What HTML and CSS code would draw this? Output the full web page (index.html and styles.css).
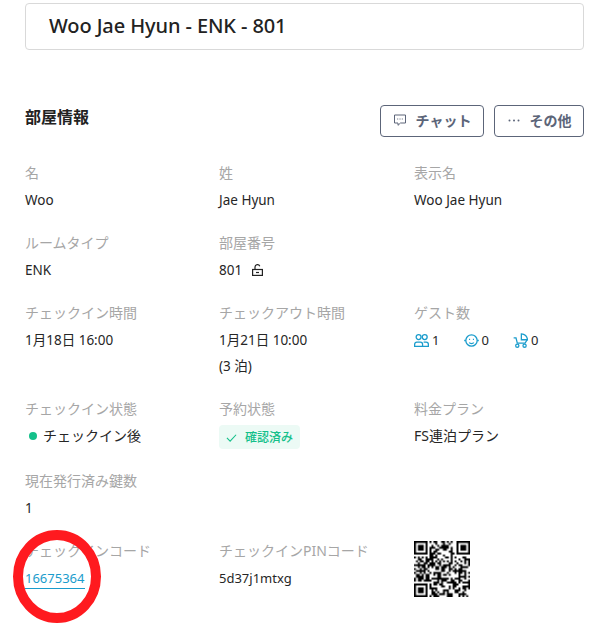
FILE: index.html
```html
<!DOCTYPE html>
<html lang="ja">
<head>
<meta charset="utf-8">
<title>部屋情報</title>
<link rel="stylesheet" href="styles.css">
</head>
<body>
<main class="page">
  <div class="title-box">Woo Jae Hyun - ENK - 801</div>
  <header class="section-head">
    <h2 class="section-title">部屋情報</h2>
    <div class="actions">
      <button class="btn btn-chat" type="button">
        <svg class="btn-icon" viewBox="0 0 14 14" fill="none" stroke="currentColor" stroke-width="1"><path d="M1.500 2h11v8H7.500L5 12.300v-2.300H1.500z"/><path d="M4.200 6h1M6.500 6h1M8.800 6h1"/></svg>
        チャット
      </button>
      <button class="btn btn-more" type="button">
        <svg class="btn-icon" viewBox="0 0 14 14" fill="currentColor"><circle cx="2.500" cy="7.500" r="1"/><circle cx="7" cy="7.500" r="1"/><circle cx="11.500" cy="7.500" r="1"/></svg>
        その他
      </button>
    </div>
  </header>
  <section class="grid">
    <div class="cell"><div class="label">名</div><div class="value">Woo</div></div>
    <div class="cell"><div class="label">姓</div><div class="value">Jae Hyun</div></div>
    <div class="cell"><div class="label">表示名</div><div class="value">Woo Jae Hyun</div></div>

    <div class="cell"><div class="label">ルームタイプ</div><div class="value">ENK</div></div>
    <div class="cell"><div class="label">部屋番号</div><div class="value value-row">801
      <svg class="lock" viewBox="0 0 11 12" fill="none" stroke="#222" stroke-width="1.200"><path d="M3 5.500V3a2.500 2.500 0 0 1 4.800-.8"/><rect x=".6" y="5.500" width="9.800" height="5.900"/><path d="M4 8.500h3"/></svg>
    </div></div>
    <div class="cell"></div>

    <div class="cell"><div class="label">チェックイン時間</div><div class="value">1月18日 16:00</div></div>
    <div class="cell"><div class="label">チェックアウト時間</div><div class="value">1月21日 10:00</div><div class="value value-next">(3 泊)</div></div>
    <div class="cell"><div class="label">ゲスト数</div><div class="value guests">
      <span class="guest">
        <svg class="guest-icon" viewBox="0 0 14 14" fill="none" stroke="currentColor" stroke-width="1.200"><circle cx="4.300" cy="3.800" r="2.300"/><circle cx="10" cy="3.800" r="2.300"/><path d="M.6 12.500V10.500a2 2 0 0 1 2-2h3.400a2 2 0 0 1 2 2v2zM9 8.500h2.400a2 2 0 0 1 2 2v2H8"/></svg>
        1</span>
      <span class="guest">
        <svg class="guest-icon" viewBox="0 0 14 14" fill="none" stroke="currentColor" stroke-width="1.200"><circle cx="7" cy="7" r="5.300"/><path d="M1.700 7H.2M13.800 7h-1.500M4.800 9c1.100 1.100 3.300 1.100 4.400 0"/><path d="M4.700 6h1M8.300 6h1"/></svg>
        0</span>
      <span class="guest">
        <svg class="guest-icon" viewBox="0 0 14 14" fill="none" stroke="currentColor" stroke-width="1.200"><path d="M7.800.8v5.500h5.700A5.700 5.700 0 0 0 7.800.8z"/><path d="M.6 4.500h2.200l1.200 5h7.300l1.900-3.200"/><circle cx="4" cy="11.800" r="1.500"/><circle cx="10.800" cy="11.800" r="1.500"/></svg>
        0</span>
    </div></div>

    <div class="cell"><div class="label">チェックイン状態</div><div class="value status"><span class="dot"></span>チェックイン後</div></div>
    <div class="cell"><div class="label">予約状態</div>
      <div class="tag">
        <svg class="tag-icon" viewBox="0 0 12 12" fill="none" stroke="currentColor" stroke-width="1.200"><path d="M1 6.500 4.500 10 11 3"/></svg>
        確認済み
      </div></div>
    <div class="cell"><div class="label">料金プラン</div><div class="value value-cjk">FS連泊プラン</div></div>

    <div class="cell"><div class="label">現在発行済み鍵数</div><div class="value">1</div></div>
    <div class="cell"></div>
    <div class="cell"></div>

    <div class="cell"><div class="label">チェックインコード</div><div class="value value-code"><a class="code-link" href="#">16675364</a></div></div>
    <div class="cell"><div class="label">チェックインPINコード</div><div class="value value-code">5d37j1mtxg</div></div>
    <div class="cell"><canvas id="qr" class="qr" width="29" height="29"></canvas></div>
  </section>
  <svg class="circle" viewBox="0 0 88 93" fill="none"><ellipse cx="44" cy="46.500" rx="39" ry="41.500" stroke="#ff1a1f" stroke-width="10"/></svg>
</main>
<script src="qr.js"></script>
</body>
</html>
```

FILE: styles.css
```css
* { box-sizing: border-box; }
html, body { margin: 0; padding: 0; background: #fff; }
body {
  font-family: "Noto Sans", "Noto Sans CJK JP", sans-serif;
  color: #262626;
  font-size: 13px;
}
.page {
  position: relative;
  width: 606px;
  height: 642px;
  padding: 3px 22px 0 25px;
  overflow: hidden;
}
.title-box {
  height: 47px;
  border: 1px solid #d9d9d9;
  border-radius: 4px;
  padding-left: 23px;
  font-size: 20px;
  letter-spacing: -0.1px;
  font-weight: 500;
  line-height: 43px;
  color: #222;
}
.section-head {
  display: flex;
  justify-content: space-between;
  align-items: flex-start;
  margin-top: 55px;
  height: 32px;
}
.section-title {
  margin: 0;
  font-size: 16px;
  line-height: 24px;
  font-weight: 700;
  color: #222;
}
.actions { display: flex; gap: 10px; }
.btn {
  display: flex;
  align-items: center;
  justify-content: center;
  height: 32px;
  border: 1px solid #5c6579;
  border-radius: 4px;
  background: #fff;
  color: #5c6579;
  font-family: inherit;
  font-size: 14px;
  font-weight: 700;
  padding: 0 0 2px;
}
.btn-chat { width: 104px; gap: 9px; }
.btn-more { width: 90px; gap: 9px; }
.btn-icon { width: 14px; height: 14px; }
.grid {
  display: grid;
  grid-template-columns: 194px 195px 170px;
  grid-template-rows: 70px 70px 96px 72px 70px 70px;
  margin-top: 21px;
}
.label {
  font-size: 14px;
  line-height: 22px;
  color: #a6a6a6;
  margin-top: 4px;
  margin-bottom: 5px;
}
.value {
  font-size: 13.500px;
  line-height: 22px;
  color: #262626;
}
.value-next { margin-top: 4px; }
.value-cjk { font-size: 14px; }
.value-code { font-size: 13px; }
.value-row { display: flex; align-items: center; gap: 10px; }
.lock { width: 11px; height: 12px; }
.guests { display: flex; }
.guest { display: flex; align-items: center; gap: 3px; width: 49.500px; font-size: 13px; }
.guest-icon { width: 15px; height: 15px; color: #1a9ccc; }
.status { display: flex; align-items: center; padding-left: 4px; gap: 6px; font-size: 14px; }
.dot { width: 8px; height: 8px; border-radius: 50%; background: #14c08a; }
.tag {
  display: inline-flex;
  align-items: center;
  gap: 8px;
  width: 81px;
  height: 24px;
  padding: 0 0 0 7px;
  background: #ecfaf5;
  color: #14c08a;
  border-radius: 4px;
  font-size: 12px;
  font-weight: 500;
}
.tag-icon { width: 11px; height: 11px; }
.code-link {
  display: inline-block;
  color: #1a9ccc;
  text-decoration: none;
  border-bottom: 1px solid #1a9ccc;
  line-height: 19px;
}
.qr {
  display: block;
  width: 56px;
  height: 56px;
  margin-top: 5px;
}
.circle {
  position: absolute;
  left: 13px;
  top: 530px;
  width: 88px;
  height: 93px;
}
```

FILE: qr.js
```js
var c = document.getElementById('qr').getContext('2d');
var n = 29, s = 12345;
function rnd() { s = (s * 1103515245 + 12345) & 0x7fffffff; return (s >> 16) & 1; }
function finder(x, y) {
  c.fillStyle = '#fff'; c.fillRect(x - 1, y - 1, 9, 9);
  c.fillStyle = '#000'; c.fillRect(x, y, 7, 7);
  c.fillStyle = '#fff'; c.fillRect(x + 1, y + 1, 5, 5);
  c.fillStyle = '#000'; c.fillRect(x + 2, y + 2, 3, 3);
}
c.fillStyle = '#fff'; c.fillRect(0, 0, n, n);
c.fillStyle = '#000';
for (var y = 0; y < n; y++) for (var x = 0; x < n; x++) if (rnd()) c.fillRect(x, y, 1, 1);
finder(0, 0); finder(22, 0); finder(0, 22);
```
